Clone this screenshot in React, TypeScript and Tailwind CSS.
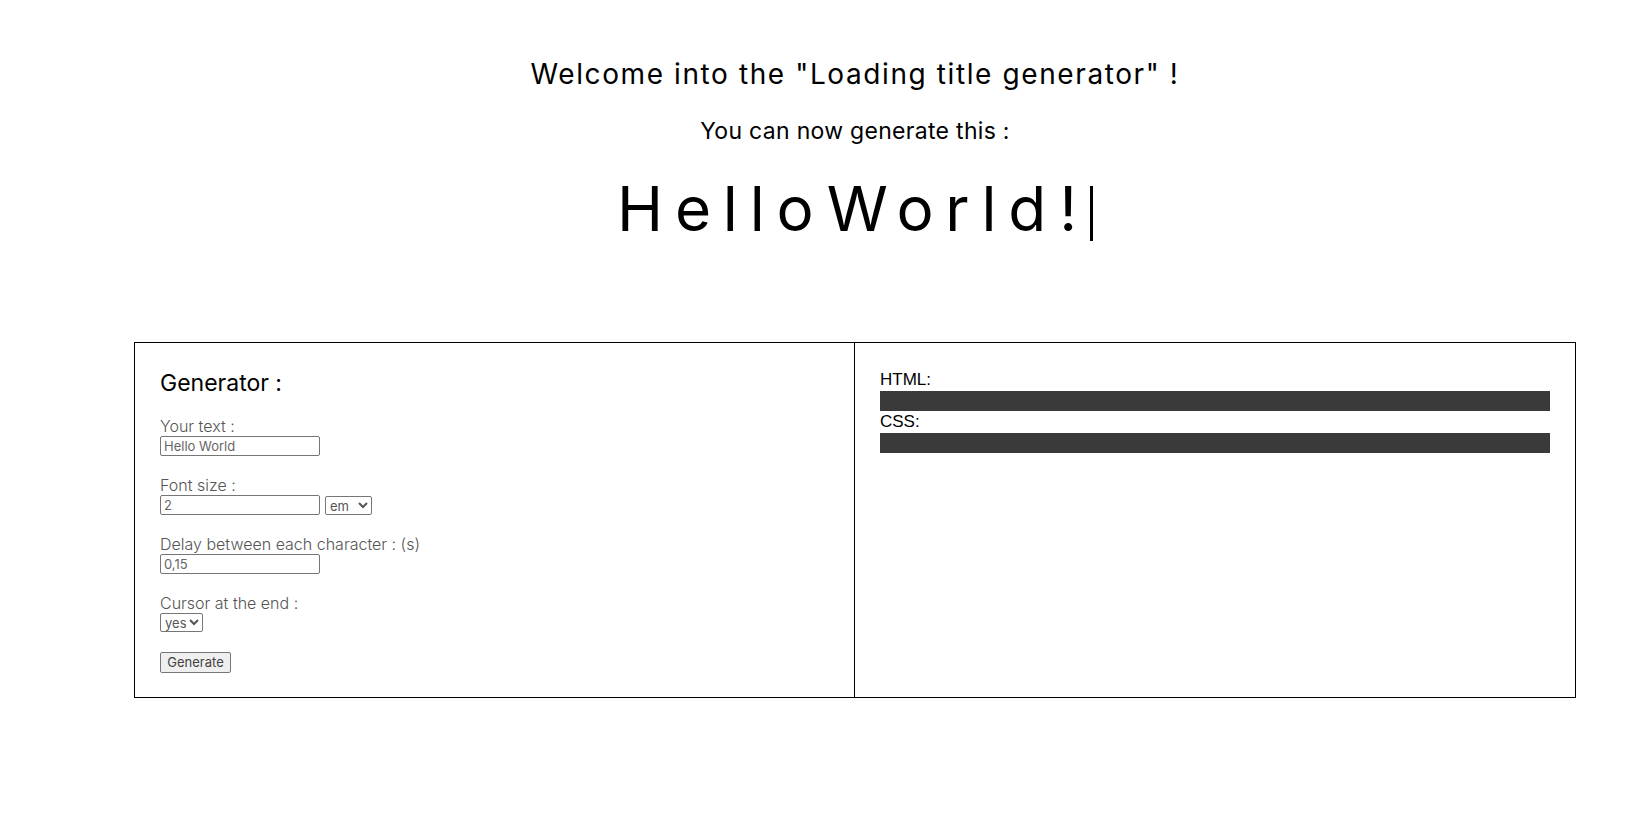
import { useState } from 'react';

const Field = ({ label, children }: { label: string; children: React.ReactNode }) => (
  <div className="flex flex-col items-start">
    <label className="text-[16px] leading-[19px] font-light text-[#555]">{label}</label>
    {children}
  </div>
);

export default function App() {
  const [text, setText] = useState('Hello World');
  const [size, setSize] = useState('2');
  const [delay, setDelay] = useState('0,15');

  return (
    <div className="min-h-[815px] bg-white font-['Inter',sans-serif] text-black">
      <div className="ml-[134px] w-[1442px] pt-[58px]">
        {/* Header */}
        <h1 className="text-center text-[28px] leading-[32px] font-normal tracking-[1.6px]">
          Welcome into the "Loading title generator" !
        </h1>
        <p className="mt-[27px] text-center text-[23px] leading-[28px] font-normal tracking-[0.3px]">
          You can now generate this :
        </p>
        <div className="mt-[28px] text-center text-[62px] leading-[72px] font-normal tracking-[0.19em] [word-spacing:-0.45em]">
          Hello World !
          <span className="ml-[1px] inline-block h-[55px] w-[3px] bg-black align-[-10px]" />
        </div>

        {/* Generator box */}
        <div className="mt-[97px] grid grid-cols-2 border border-black">
          <div className="border-r border-black px-[25px] pt-[27px] pb-[24px]">
            <h2 className="text-[23px] leading-[26px] font-normal">Generator :</h2>
            <div className="mt-[21px] flex flex-col gap-[20px]">
              <Field label="Your text :">
                <input
                  value={text}
                  onChange={(e) => setText(e.target.value)}
                  className="w-[160px] h-[20px] border border-[#767676] rounded-[2px] px-[3px] text-[13px] text-[#666] outline-none"
                />
              </Field>
              <Field label="Font size :">
                <div className="flex items-center gap-[5px]">
                  <input
                    value={size}
                    onChange={(e) => setSize(e.target.value)}
                    className="w-[160px] h-[20px] border border-[#767676] rounded-[2px] px-[3px] text-[13px] text-[#666] outline-none"
                  />
                  <select className="h-[19px] w-[47px] border border-[#767676] rounded-[2px] text-[13px] text-[#555]">
                    <option>em</option>
                    <option>px</option>
                    <option>rem</option>
                  </select>
                </div>
              </Field>
              <Field label="Delay between each character : (s)">
                <input
                  value={delay}
                  onChange={(e) => setDelay(e.target.value)}
                  className="w-[160px] h-[20px] border border-[#767676] rounded-[2px] px-[3px] text-[13px] text-[#666] outline-none"
                />
              </Field>
              <Field label="Cursor at the end :">
                <select className="h-[19px] w-[43px] border border-[#767676] rounded-[2px] text-[13px] text-[#555]">
                  <option>yes</option>
                  <option>no</option>
                </select>
              </Field>
              <div className="-mt-[3px]">
                <button className="h-[21px] w-[71px] border border-[#767676] rounded-[2px] bg-[#efefef] text-[13px] text-[#444]">
                  Generate
                </button>
              </div>
            </div>
          </div>

          <div className="px-[25px] pt-[27px] font-['Liberation_Sans',Arial,sans-serif] text-[17px]">
            <div className="leading-[20px]">HTML:</div>
            <div className="mt-[1px] h-[20px] bg-[#3a3a3a]" />
            <div className="mt-[1px] leading-[20px]">CSS:</div>
            <div className="mt-[1px] h-[20px] bg-[#3a3a3a]" />
          </div>
        </div>
      </div>
    </div>
  );
}
